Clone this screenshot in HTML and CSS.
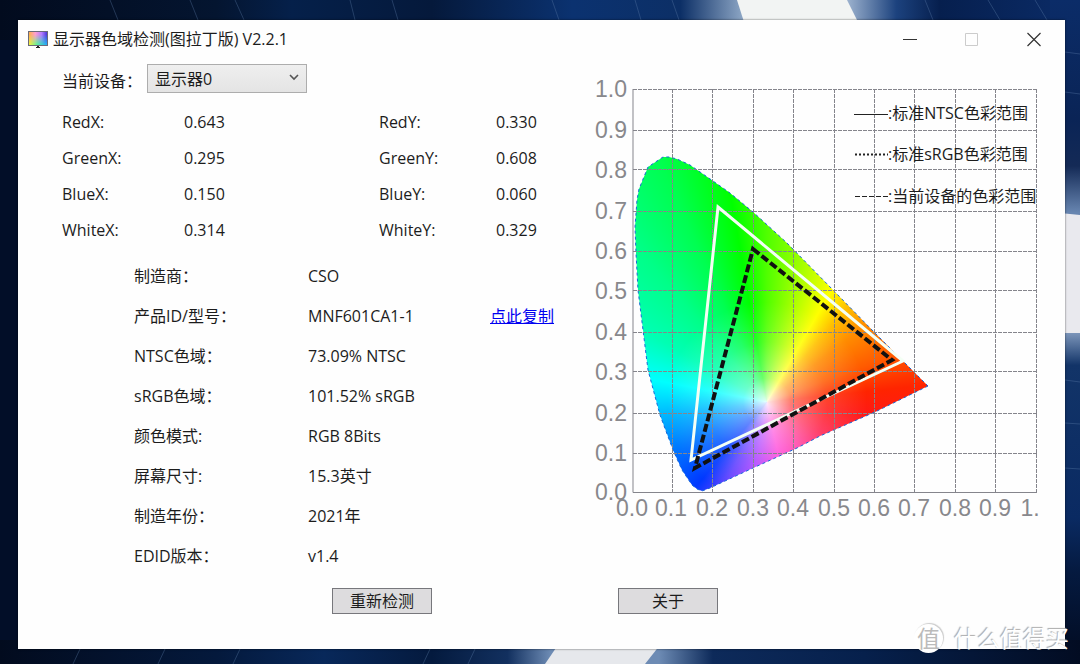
FILE: index.html
```html
<!DOCTYPE html>
<html lang="zh-CN">
<head>
<meta charset="utf-8">
<title>显示器色域检测(图拉丁版) V2.2.1</title>
<link rel="stylesheet" href="styles.css">
</head>
<body>
<svg class="wallpaper" viewBox="0 0 1080 664" preserveAspectRatio="none" aria-hidden="true">
  <defs>
    <linearGradient id="topBand" x1="0" x2="1" y1="0" y2="0">
      <stop offset="0" stop-color="#020b1e"/><stop offset=".2" stop-color="#041530"/><stop offset=".27" stop-color="#05204a"/>
      <stop offset=".4" stop-color="#05193b"/><stop offset=".53" stop-color="#0b3270"/><stop offset=".63" stop-color="#0c2f66"/>
      <stop offset=".69" stop-color="#91aac8"/><stop offset=".78" stop-color="#a9bdd6"/><stop offset=".83" stop-color="#1c427e"/>
      <stop offset=".87" stop-color="#061f4e"/><stop offset="1" stop-color="#0b2c68"/>
    </linearGradient>
    <linearGradient id="rightBand" x1="0" x2="0" y1="0" y2="1">
      <stop offset="0" stop-color="#0b2c68"/><stop offset=".18" stop-color="#0a2456"/><stop offset=".25" stop-color="#142a56"/>
      <stop offset=".32" stop-color="#6785b0"/><stop offset=".5" stop-color="#7f98bc"/><stop offset=".55" stop-color="#123468"/>
      <stop offset=".78" stop-color="#0a2a62"/><stop offset=".86" stop-color="#051a40"/><stop offset="1" stop-color="#020b20"/>
    </linearGradient>
    <linearGradient id="bottomBand" x1="0" x2="1" y1="0" y2="0">
      <stop offset="0" stop-color="#020b1e"/><stop offset=".2" stop-color="#04193c"/><stop offset=".3" stop-color="#08285a"/>
      <stop offset=".4" stop-color="#041a3e"/><stop offset=".47" stop-color="#12305f"/><stop offset=".51" stop-color="#6d8bb4"/>
      <stop offset=".61" stop-color="#6d8bb4"/><stop offset=".66" stop-color="#0d2a5a"/><stop offset=".8" stop-color="#06204c"/>
      <stop offset="1" stop-color="#020c22"/>
    </linearGradient>
  </defs>
  <rect width="1080" height="664" fill="#020e28"/>
  <rect width="1080" height="40" fill="url(#topBand)"/>
  <rect x="1050" width="30" height="664" fill="url(#rightBand)"/>
  <rect y="640" width="1080" height="24" fill="url(#bottomBand)"/>
  <path d="M737 0H847L858 22H744z" fill="#f2f4f3"/>
  <path d="M1060 213L1080 215V333H1060z" fill="#e9e9ee"/>
  <path d="M558 645H660L645 664H545z" fill="#e6e8ec"/>
  <path d="M110 0l8 20M190 0l8 20M235 0l9 20M350 0l5 20M392 0l6 20M552 0l7 20M635 0l6 20M672 0l7 20M925 0l8 20M988 0l12 20M1035 0l12 20M80 649l-7 15M165 649l-7 15M240 649l-7 15M430 649l-7 15M475 649l-7 15M1065 52l15 2M1065 92l15 2M1065 380l15 2M1065 423l15 1M1065 468l15 1" stroke="#6182ac" stroke-opacity=".35" fill="none"/>
</svg>

<main class="window">
  <header class="titlebar">
    <svg class="app-icon" viewBox="0 0 20 17" aria-hidden="true">
      <defs>
        <linearGradient id="hue"><stop stop-color="#ffb04a"/><stop offset=".35" stop-color="#ff9fd0"/><stop offset=".7" stop-color="#b47cff"/><stop offset="1" stop-color="#4a35d8"/></linearGradient>
        <linearGradient id="hue2"><stop stop-color="#f6f43c"/><stop offset=".45" stop-color="#5cf09a"/><stop offset="1" stop-color="#20a8ff"/></linearGradient>
        <linearGradient id="fade" x1="0" x2="0" y1="0" y2="1"><stop offset=".2" stop-color="#000"/><stop offset=".8" stop-color="#fff"/></linearGradient>
        <mask id="fadeMask"><rect width="20" height="17" fill="url(#fade)"/></mask>
      </defs>
      <rect x="0" y="0" width="20" height="15" fill="#6a6978"/>
      <rect x="1" y="1" width="18" height="13" fill="url(#hue)"/>
      <rect x="1" y="1" width="18" height="13" fill="url(#hue2)" mask="url(#fadeMask)"/>
      <path d="M9 15h2v1h1v1H8v-1h1z" fill="#222"/>
    </svg>
    <h1 class="title">显示器色域检测(图拉丁版) V2.2.1</h1>
    <div class="controls">
      <button class="control" type="button" aria-label="最小化"><svg viewBox="0 0 16 16"><path d="M1 8.500h14" stroke="#333" fill="none"/></svg></button>
      <button class="control" type="button" aria-label="最大化" disabled><svg viewBox="0 0 16 16"><path d="M1.500 2.500h12v12h-12z" stroke="#ccc" fill="none"/></svg></button>
      <button class="control" type="button" aria-label="关闭"><svg viewBox="0 0 16 16"><path d="M1.500 2l13 13M14.500 2l-13 13" stroke="#333" stroke-width="1.200" fill="none"/></svg></button>
    </div>
  </header>

  <div class="content">
    <section class="details">
      <div class="device">
        <label for="device">当前设备：</label>
        <span class="select-wrap">
          <select id="device"><option>显示器0</option></select>
          <svg class="chevron" viewBox="0 0 10 7" aria-hidden="true"><path d="M1 1l4 4 4-4" fill="none" stroke="#555" stroke-width="1.600"/></svg>
        </span>
      </div>
      <table class="primaries">
        <tr><th>RedX:</th><td>0.643</td><th>RedY:</th><td>0.330</td></tr>
        <tr><th>GreenX:</th><td>0.295</td><th>GreenY:</th><td>0.608</td></tr>
        <tr><th>BlueX:</th><td>0.150</td><th>BlueY:</th><td>0.060</td></tr>
        <tr><th>WhiteX:</th><td>0.314</td><th>WhiteY:</th><td>0.329</td></tr>
      </table>
      <table class="info">
        <tr><th>制造商：</th><td>CSO</td><td></td></tr>
        <tr><th>产品ID/型号：</th><td>MNF601CA1-1</td><td><a href="#copy">点此复制</a></td></tr>
        <tr><th>NTSC色域：</th><td>73.09% NTSC</td><td></td></tr>
        <tr><th>sRGB色域：</th><td>101.52% sRGB</td><td></td></tr>
        <tr><th>颜色模式:</th><td>RGB 8Bits</td><td></td></tr>
        <tr><th>屏幕尺寸:</th><td>15.3英寸</td><td></td></tr>
        <tr><th>制造年份：</th><td>2021年</td><td></td></tr>
        <tr><th>EDID版本：</th><td>v1.4</td><td></td></tr>
      </table>
    </section>

    <svg class="chart" viewBox="590 70 460 460" role="img" aria-label="色域图">
      <defs>
        <clipPath id="locus"><path d="M663 157H669L677 159L690 165L713 181L730 193L753 212L787 243L835 292L875 333L928 386L875 412L820 436L797 448L753 468L710 488L702 491L697 489L692 485L682 470L673 450L660 415L648 370L638 290L636 253L635 227L637 200L639 189L648 167z"/></clipPath>
      </defs>
      <g clip-path="url(#locus)">
        <foreignObject x="633" y="150" width="300" height="345"><div class="spectrum"></div></foreignObject>
      </g>
      <path d="M928 386L875 412L820 436L797 448L753 468L710 488L702 491L697 489L692 485L682 470L673 450L660 415L648 370L638 290L636 253L635 227L637 200L639 189L648 167L663 157H669L677 159L690 165L713 181L730 193L753 212L787 243L835 292L875 333L928 386" fill="none" stroke="#1769d8" stroke-width="1" stroke-dasharray="3 3"/>
      <path d="M633 89.500H1037M633 130.500H1037M633 169.500H1037M633 211.500H1037M633 251.500H1037M633 290.500H1037M633 332.500H1037M633 371.500H1037M633 413.500H1037M633 453.500H1037M672.500 89V493M712.500 89V493M753.500 89V493M793.500 89V493M834.500 89V493M874.500 89V493M914.500 89V493M955.500 89V493M995.500 89V493M1036.500 89V493" class="grid-line"/>
      <path d="M633 89V492.500H1037" class="axis"/>
      <path d="M718 207L903 361L691 460z" class="ntsc"/>
      <path d="M753 249L892 360L695 468z" class="device-gamut"/>
      <g class="axis-label" text-anchor="end">
        <text x="627" y="97">1.0</text><text x="627" y="138">0.9</text><text x="627" y="178">0.8</text><text x="627" y="219">0.7</text><text x="627" y="259">0.6</text><text x="627" y="299">0.5</text><text x="627" y="340">0.4</text><text x="627" y="380">0.3</text><text x="627" y="421">0.2</text><text x="627" y="461">0.1</text><text x="627" y="500">0.0</text>
      </g>
      <g class="axis-label" text-anchor="middle">
        <text x="632" y="516">0.0</text><text x="671" y="516">0.1</text><text x="712" y="516">0.2</text><text x="753" y="516">0.3</text><text x="793" y="516">0.4</text><text x="834" y="516">0.5</text><text x="874" y="516">0.6</text><text x="914" y="516">0.7</text><text x="955" y="516">0.8</text><text x="995" y="516">0.9</text><text x="1030" y="516">1.</text>
      </g>
      <g class="legend-line">
        <path d="M854 114.500h34"/>
        <path d="M855 154.500h33" stroke-width="2" stroke-dasharray="2 2"/>
        <path d="M855 196.500h33" stroke-dasharray="5 2"/>
      </g>
      <g class="legend">
        <text x="888" y="119">:标准NTSC色彩范围</text>
        <text x="888" y="160">:标准sRGB色彩范围</text>
        <text x="888" y="202">:当前设备的色彩范围</text>
      </g>
    </svg>
  </div>

  <footer class="actions">
    <button class="action" type="button">重新检测</button>
    <button class="action" type="button">关于</button>
  </footer>
</main>

<div class="watermark"><span class="badge">值</span><span>什么值得买</span></div>
</body>
</html>
```
FILE: styles.css
```css
* { box-sizing: border-box; }

body {
  margin: 0;
  min-height: 100vh;
  padding: 20px 15px 15px 18px;
  display: flex;
  position: relative;
  background: #020e28;
  color: #1c1c1c;
  font: 16px/24px "Open Sans", "Noto Sans CJK SC", sans-serif;
}

.wallpaper {
  position: absolute;
  inset: 0;
  width: 100%;
  height: 100%;
}

.window {
  position: relative;
  flex: 1;
  display: flex;
  flex-direction: column;
  background: #fefefe;
  box-shadow: 0 0 2px rgba(0, 0, 0, .6);
}

.titlebar {
  display: flex;
  align-items: center;
  height: 38px;
  padding: 0 15px 0 10px;
}

.app-icon {
  width: 20px;
  height: 17px;
}

.title {
  margin: 0 0 0 5px;
  font-size: 16px;
  font-weight: 400;
}

.controls {
  display: flex;
  gap: 30px;
  margin-left: auto;
}

.control {
  width: 32px;
  height: 32px;
  padding: 8px;
  border: 0;
  background: none;
}

.control svg {
  display: block;
  width: 16px;
  height: 16px;
}

.content {
  display: flex;
  align-items: flex-start;
  padding: 6px 15px 0 44px;
}

.details {
  flex: 1;
}

.device {
  display: flex;
  align-items: flex-start;
  gap: 5px;
}

.device label {
  padding-top: 5px;
}

.select-wrap {
  position: relative;
  display: block;
  width: 160px;
}

select {
  appearance: none;
  display: block;
  width: 100%;
  height: 29px;
  padding: 0 24px 0 7px;
  border: 1px solid #adadad;
  border-radius: 0;
  background: linear-gradient(#efefef, #e4e4e4);
  color: inherit;
  font: inherit;
}

.chevron {
  position: absolute;
  right: 8px;
  top: 10px;
  width: 10px;
  height: 7px;
}

table {
  border-collapse: collapse;
  table-layout: fixed;
  width: 100%;
}

th, td {
  padding: 0;
  font-weight: 400;
  text-align: left;
  white-space: nowrap;
}

.primaries {
  margin-top: 11px;
}

.primaries td, .primaries th { height: 36px; }
.primaries th:nth-child(1) { width: 122px; }
.primaries td:nth-child(2) { width: 195px; }
.primaries th:nth-child(3) { width: 117px; }

.info {
  width: auto;
  margin: 8px 0 0 72px;
}

.info td, .info th { height: 40px; }
.info th { width: 174px; }
.info td:nth-child(2) { width: 182px; }

a { color: #0000f0; }

.chart {
  flex: 0 0 460px;
  min-width: 0;
  margin-top: 6px;
}

.spectrum {
  height: 345px;
  background:
    radial-gradient(circle at 134px 252px, rgba(255, 255, 255, .9), rgba(255, 255, 255, .42) 24px, rgba(255, 255, 255, .15) 60px, rgba(255, 255, 255, 0) 100px),
    conic-gradient(from 0deg at 134px 252px,
      #50ff00 0deg, #a8ff00 15deg, #ffff00 30deg, #ffc000 40deg, #ff8c00 52deg,
      #ff5a00 70deg, #ff2400 84deg, #ff1818 98deg, #ff2050 120deg, #ff30a0 145deg,
      #ff40d8 168deg, #b040ff 190deg, #6040ff 207deg, #0038ff 220deg, #0078ff 243deg,
      #00b4ff 262deg, #00ffff 281deg, #00ffb4 300deg, #00ff88 320deg, #00ff50 336deg,
      #00ff00 350deg, #50ff00 360deg);
}

.grid-line {
  fill: none;
  stroke: #85858c;
  stroke-width: 1;
  stroke-dasharray: 4 1;
}

.axis {
  fill: none;
  stroke: #85858c;
}

.ntsc {
  fill: none;
  stroke: #f4fff4;
  stroke-width: 3;
}

.device-gamut {
  fill: none;
  stroke: #111;
  stroke-width: 4;
  stroke-dasharray: 8 3;
}

.axis-label {
  fill: #88888c;
  font: 23px "Liberation Sans", Arial, sans-serif;
}

.legend {
  fill: #1c1c1c;
}

.legend-line {
  fill: none;
  stroke: #222;
}

.actions {
  display: flex;
  gap: 186px;
  padding: 12px 0 0 30%;
}

.action {
  width: 100px;
  height: 26px;
  padding: 0;
  border: 1px solid #77777c;
  background: #dddcde;
  color: inherit;
  font: inherit;
  line-height: 24px;
}

.watermark {
  position: absolute;
  right: 11px;
  bottom: 11px;
  display: flex;
  align-items: center;
  gap: 11px;
  color: #fff;
  font-size: 23px;
  line-height: 30px;
  text-shadow: -1px -1px 1px #aaa;
}

.badge {
  width: 29px;
  height: 29px;
  border-radius: 50%;
  background: #fff;
  box-shadow: 1px -1px 1px #ccc;
  color: #bbb;
  font-size: 23px;
  line-height: 28px;
  text-align: center;
  text-shadow: none;
}
```
